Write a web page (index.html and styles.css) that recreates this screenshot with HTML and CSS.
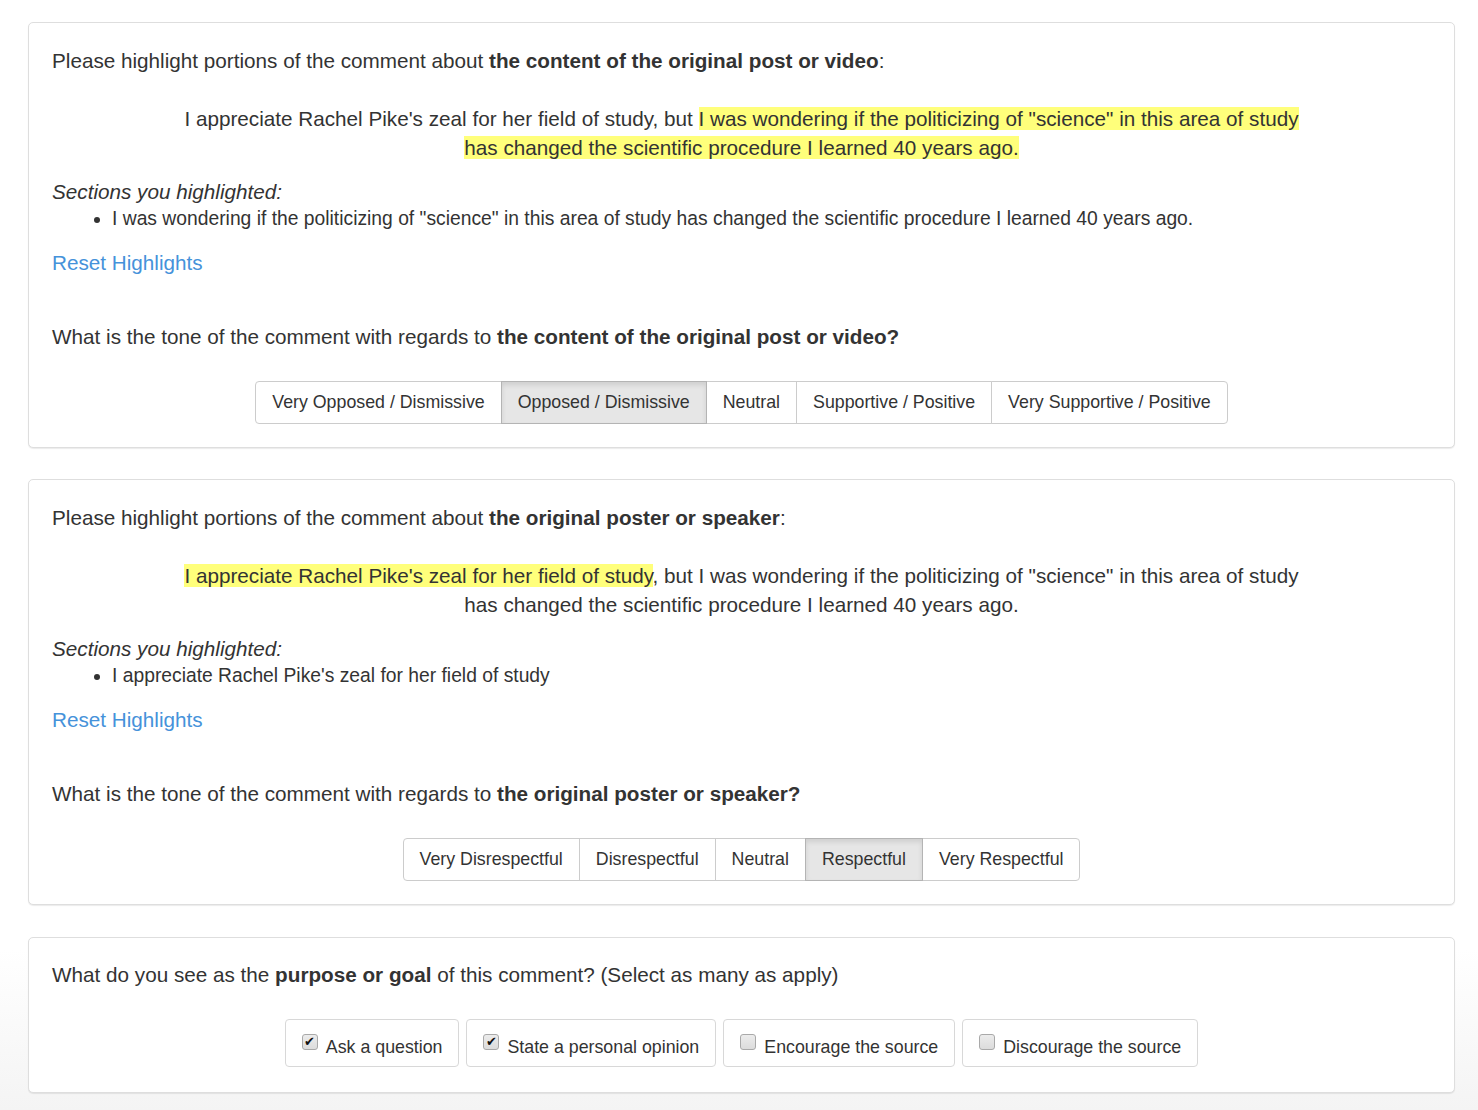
FILE: index.html
```html
<!DOCTYPE html>
<html lang="en">
<head>
<meta charset="utf-8">
<title>Comment annotation</title>
<link rel="stylesheet" href="styles.css">
</head>
<body>
<main class="page">
  <section class="card">
    <p class="prompt">Please highlight portions of the comment about <b>the content of the original post or video</b>:</p>
    <p class="comment">I appreciate Rachel Pike's zeal for her field of study, but <mark>I was wondering if the politicizing of "science" in this area of study has changed the scientific procedure I learned 40 years ago.</mark></p>
    <p class="sections-title">Sections you highlighted:</p>
    <ul class="sections">
      <li>I was wondering if the politicizing of "science" in this area of study has changed the scientific procedure I learned 40 years ago.</li>
    </ul>
    <a class="reset" href="#">Reset Highlights</a>
    <p class="question">What is the tone of the comment with regards to <b>the content of the original post or video?</b></p>
    <div class="btn-row">
      <div class="btn-group">
        <button class="btn">Very Opposed / Dismissive</button>
        <button class="btn active">Opposed / Dismissive</button>
        <button class="btn">Neutral</button>
        <button class="btn">Supportive / Positive</button>
        <button class="btn">Very Supportive / Positive</button>
      </div>
    </div>
  </section>

  <section class="card">
    <p class="prompt">Please highlight portions of the comment about <b>the original poster or speaker</b>:</p>
    <p class="comment"><mark>I appreciate Rachel Pike's zeal for her field of study</mark>, but I was wondering if the politicizing of "science" in this area of study has changed the scientific procedure I learned 40 years ago.</p>
    <p class="sections-title">Sections you highlighted:</p>
    <ul class="sections">
      <li>I appreciate Rachel Pike's zeal for her field of study</li>
    </ul>
    <a class="reset" href="#">Reset Highlights</a>
    <p class="question">What is the tone of the comment with regards to <b>the original poster or speaker?</b></p>
    <div class="btn-row">
      <div class="btn-group">
        <button class="btn">Very Disrespectful</button>
        <button class="btn">Disrespectful</button>
        <button class="btn">Neutral</button>
        <button class="btn active">Respectful</button>
        <button class="btn">Very Respectful</button>
      </div>
    </div>
  </section>

  <section class="card card-last">
    <p class="question question-first">What do you see as the <b>purpose or goal</b> of this comment? (Select as many as apply)</p>
    <div class="check-row">
      <label class="check-btn"><span class="box checked">&#10004;</span><span class="check-text">Ask a question</span></label>
      <label class="check-btn"><span class="box checked">&#10004;</span><span class="check-text">State a personal opinion</span></label>
      <label class="check-btn"><span class="box"></span><span class="check-text">Encourage the source</span></label>
      <label class="check-btn"><span class="box"></span><span class="check-text">Discourage the source</span></label>
    </div>
  </section>
</main>
</body>
</html>
```

FILE: styles.css
```css
html, body {
  margin: 0;
  padding: 0;
}

body {
  font-family: "Liberation Sans", Arial, sans-serif;
  color: #333;
  background: linear-gradient(to bottom, #ffffff 0, #ffffff 950px, #f4f4f4 1110px);
  min-height: 1110px;
}

.page {
  padding: 22px 23px 0 28px;
  display: flex;
  flex-direction: column;
  gap: 31px;
}

.card {
  background: #fff;
  border: 1px solid #dedede;
  border-radius: 5px;
  box-shadow: 0 1px 1px rgba(0, 0, 0, 0.08);
  padding: 25px 23px 23px 23px;
  display: flex;
  flex-direction: column;
  align-items: flex-start;
}

.card-last {
  margin-top: 1px;
  padding-top: 24px;
  padding-bottom: 25px;
}

p {
  margin: 0;
}

.prompt {
  font-size: 20.7px;
  line-height: 26px;
}

b {
  font-weight: bold;
}

.comment {
  align-self: stretch;
  margin: 30px 120px 0 120px;
  text-align: center;
  font-size: 20.7px;
  line-height: 29px;
}

mark {
  background: #ffff7b;
  color: #333;
}

.sections-title {
  margin-top: 17px;
  font-size: 20.7px;
  line-height: 26px;
  font-style: italic;
}

.sections {
  margin: 1px 0 0 0;
  padding-left: 60px;
  font-size: 19.3px;
  line-height: 26px;
}

.reset {
  margin-top: 18px;
  font-size: 20.7px;
  line-height: 26px;
  color: #4592da;
  text-decoration: none;
}

.question {
  margin-top: 48px;
  font-size: 20.7px;
  line-height: 26px;
}

.question-first {
  margin-top: 0;
}

.btn-row {
  align-self: stretch;
  margin-top: 31px;
  display: flex;
  justify-content: center;
}

.btn-group {
  display: flex;
}

.btn {
  font-family: "Liberation Sans", Arial, sans-serif;
  font-size: 17.8px;
  color: #333;
  background: #fff;
  border: 1px solid #ccc;
  margin-left: -1px;
  height: 43px;
  padding: 0 16px;
  border-radius: 0;
  cursor: pointer;
}

.btn:first-child {
  margin-left: 0;
  border-radius: 4px 0 0 4px;
}

.btn:last-child {
  border-radius: 0 4px 4px 0;
}

.btn.active {
  background: #e6e6e6;
  border-color: #b4b4b4;
  box-shadow: inset 0 3px 5px rgba(0, 0, 0, 0.1);
  position: relative;
}

.check-row {
  align-self: stretch;
  margin-top: 31px;
  display: flex;
  justify-content: center;
  gap: 7px;
}

.check-btn {
  display: flex;
  align-items: flex-start;
  height: 48px;
  box-sizing: border-box;
  padding: 14px 16px 0 16px;
  border: 1px solid #d8d8d8;
  border-radius: 4px;
  font-size: 17.8px;
  color: #333;
  background: #fff;
}

.check-text {
  line-height: 20px;
  margin-top: 3px;
}

.box {
  width: 14px;
  height: 14px;
  border: 1px solid #a9a9a9;
  border-radius: 3px;
  background: linear-gradient(#ececec, #dcdcdc);
  margin-right: 8px;
  font-size: 13px;
  line-height: 14px;
  text-align: center;
  color: #111;
  flex: none;
}
```
